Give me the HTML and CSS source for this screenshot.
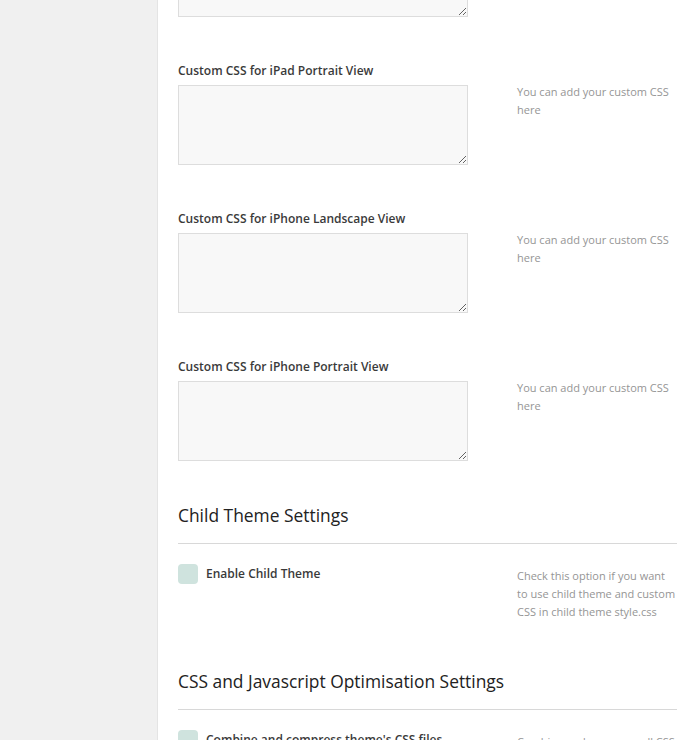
FILE: index.html
```html
<!DOCTYPE html>
<html>
<head>
<meta charset="utf-8">
<link rel="stylesheet" href="styles.css">
</head>
<body>
<div class="layout">
  <aside class="sidebar"></aside>
  <main class="content">
    <div class="field">
      <div class="field-main">
        <label class="field-label">Custom CSS for iPad Landscape View</label>
        <textarea class="field-input"></textarea>
      </div>
      <p class="field-desc">You can add your custom CSS here</p>
    </div>
    <div class="field">
      <div class="field-main">
        <label class="field-label">Custom CSS for iPad Portrait View</label>
        <textarea class="field-input"></textarea>
      </div>
      <p class="field-desc">You can add your custom CSS here</p>
    </div>
    <div class="field">
      <div class="field-main">
        <label class="field-label">Custom CSS for iPhone Landscape View</label>
        <textarea class="field-input"></textarea>
      </div>
      <p class="field-desc">You can add your custom CSS here</p>
    </div>
    <div class="field">
      <div class="field-main">
        <label class="field-label">Custom CSS for iPhone Portrait View</label>
        <textarea class="field-input"></textarea>
      </div>
      <p class="field-desc">You can add your custom CSS here</p>
    </div>

    <h2 class="section-title">Child Theme Settings</h2>
    <div class="check-row">
      <div class="check-main">
        <span class="checkbox"></span>
        <span class="check-label">Enable Child Theme</span>
      </div>
      <p class="check-desc">Check this option if you want to use child theme and custom CSS in child theme style.css</p>
    </div>

    <h2 class="section-title">CSS and Javascript Optimisation Settings</h2>
    <div class="check-row">
      <div class="check-main">
        <span class="checkbox"></span>
        <span class="check-label">Combine and compress theme's CSS files</span>
      </div>
      <p class="check-desc">Combine and compress all CSS files to one file</p>
    </div>
  </main>
</div>
</body>
</html>
```

FILE: styles.css
```css
html, body {
  margin: 0;
  padding: 0;
  background: #fff;
  height: 100%;
  overflow: hidden;
}

body {
  font-family: "Open Sans", "Noto Sans", sans-serif;
  color: #333;
}

.layout {
  display: flex;
  min-height: 100%;
}

.sidebar {
  width: 157px;
  flex: none;
  background: #f0f0f0;
  border-right: 1px solid #e4e4e4;
}

.content {
  flex: 1;
  padding: 0 18px 0 20px;
  margin-top: -87px;
}

.field {
  display: flex;
  margin-bottom: 44px;
}

.field-main {
  width: 290px;
  flex: none;
  display: flex;
  flex-direction: column;
}

.field-label {
  font-size: 12px;
  line-height: 18px;
  font-weight: 600;
  color: #3a3a3a;
  margin: 1px 0 5px;
}

.field-input {
  box-sizing: border-box;
  width: 290px;
  height: 80px;
  margin: 0;
  background: #f8f8f8;
  border: 1px solid #dddddd;
  border-radius: 0;
  resize: vertical;
  font-family: inherit;
}

.field-desc {
  margin: 22px 0 0 49px;
  width: 160px;
  font-size: 11px;
  line-height: 18px;
  color: #959595;
}

.section-title {
  margin: 42px 0 0;
  padding-bottom: 16px;
  border-bottom: 1px solid #d8d8d8;
  font-size: 17.4px;
  line-height: 24px;
  font-weight: 400;
  color: #222;
}

.field + .section-title {
  margin-top: -2px;
}

.check-row {
  display: flex;
  padding-top: 20px;
}

.check-main {
  width: 339px;
  flex: none;
  display: flex;
  align-items: flex-start;
  gap: 8px;
}

.checkbox {
  width: 20px;
  height: 20px;
  border-radius: 4px;
  background: #cfe3de;
  flex: none;
}

.check-label {
  font-size: 12px;
  line-height: 18px;
  font-weight: 600;
  color: #3a3a3a;
  margin-top: 1px;
}

.check-desc {
  margin: 3px 0 0;
  width: 160px;
  font-size: 11px;
  line-height: 18px;
  color: #959595;
}

.check-row + .section-title {
  margin-top: 48px;
}
```
